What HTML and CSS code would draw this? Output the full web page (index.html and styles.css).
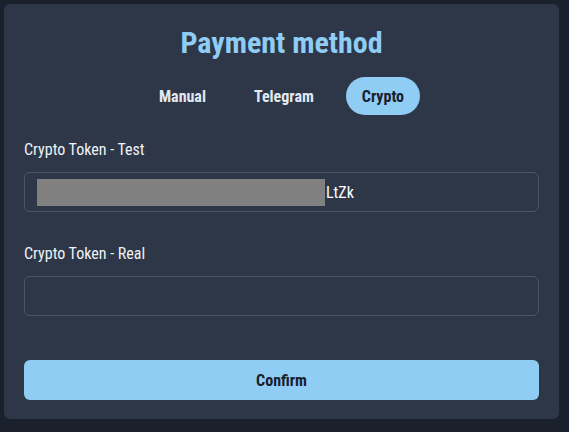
FILE: index.html
```html
<!DOCTYPE html>
<html>
<head>
<meta charset="utf-8">
<link rel="stylesheet" href="styles.css">
</head>
<body>
<div class="card">
  <h1 class="title">Payment method</h1>
  <div class="tabs">
    <span class="tab">Manual</span>
    <span class="tab">Telegram</span>
    <span class="tab active">Crypto</span>
  </div>
  <div class="field">
    <div class="label">Crypto Token - Test</div>
    <div class="input"><span class="redact"></span><span class="val">LtZk</span></div>
  </div>
  <div class="field second">
    <div class="label">Crypto Token - Real</div>
    <div class="input"></div>
  </div>
  <button class="confirm">Confirm</button>
</div>
</body>
</html>
```
FILE: styles.css
```css
html, body {
  margin: 0;
  padding: 0;
  background: #1a202c;
  width: 569px;
  height: 432px;
  overflow: hidden;
}
body {
  padding: 4px;
  box-sizing: border-box;
  font-family: "Roboto Condensed", Roboto, "Liberation Sans", sans-serif;
}
.card {
  width: 555px;
  height: 415px;
  box-sizing: border-box;
  background: #2d3748;
  border-radius: 6px;
  padding: 20px 20px 0 20px;
  display: flex;
  flex-direction: column;
}
.title {
  margin: 1px 0 0 0;
  text-align: center;
  color: #90cdf4;
  font-size: 30px;
  font-weight: 700;
  line-height: 36px;
}
.tabs {
  display: flex;
  justify-content: center;
  gap: 16px;
  margin-top: 16px;
}
.tab {
  height: 38px;
  padding: 0 16px;
  border-radius: 19px;
  display: flex;
  align-items: center;
  font-size: 16px;
  font-weight: 700;
  color: #e2e8f0;
}
.tab.active {
  background: #90cdf4;
  color: #1a202c;
}
.field {
  margin-top: 25px;
}
.field.second {
  margin-top: 32px;
}
.label {
  color: #f0f2f5;
  font-size: 16px;
  font-weight: 400;
  line-height: 20px;
  margin-bottom: 12px;
}
.input {
  height: 40px;
  box-sizing: border-box;
  border: 1px solid #4a5568;
  border-radius: 6px;
  display: flex;
  align-items: center;
  padding-left: 12px;
}
.redact {
  width: 288px;
  height: 27px;
  background: #808080;
}
.val {
  color: #ffffff;
  font-size: 16px;
  font-weight: 400;
  margin-left: 1px;
}
.confirm {
  margin-top: 44px;
  height: 40px;
  border: none;
  border-radius: 6px;
  background: #90cdf4;
  color: #1a202c;
  font-family: inherit;
  font-size: 16px;
  font-weight: 700;
}
```
